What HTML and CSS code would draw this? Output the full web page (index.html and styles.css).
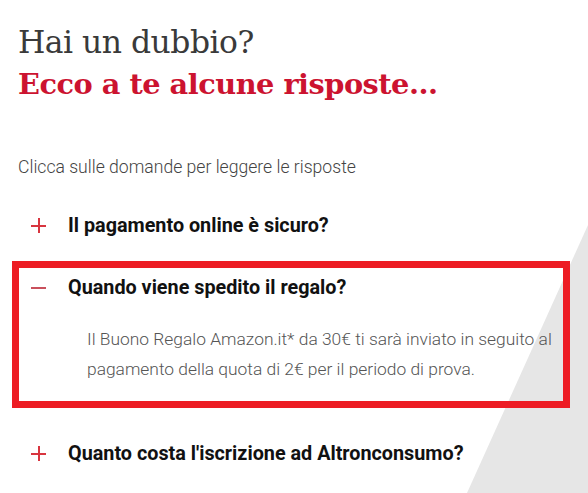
FILE: index.html
```html
<!DOCTYPE html>
<html lang="it">
<head>
<meta charset="utf-8">
<title>FAQ</title>
<link rel="stylesheet" href="styles.css">
</head>
<body>
<div class="bg-shape" aria-hidden="true"></div>
<main class="faq">
  <h1 class="title">
    <span class="title-light">Hai un dubbio?</span>
    <span class="title-strong">Ecco a te alcune risposte...</span>
  </h1>
  <p class="intro">Clicca sulle domande per leggere le risposte</p>
  <ul class="list">
    <li class="item">
      <div class="question"><span class="icon icon-plus"></span><span class="q-text">Il pagamento online è sicuro?</span></div>
    </li>
    <li class="item item-open">
      <div class="question"><span class="icon icon-minus"></span><span class="q-text">Quando viene spedito il regalo?</span></div>
      <p class="answer">Il Buono Regalo Amazon.it* da 30€ ti sarà inviato in seguito al pagamento della quota di 2€ per il periodo di prova.</p>
    </li>
    <li class="item item-last">
      <div class="question"><span class="icon icon-plus"></span><span class="q-text">Quanto costa l'iscrizione ad Altronconsumo?</span></div>
    </li>
  </ul>
</main>
</body>
</html>
```
FILE: styles.css
```css
html, body {
  margin: 0;
  padding: 0;
  background: #ffffff;
}
body {
  position: relative;
  width: 588px;
  height: 493px;
  overflow: hidden;
  font-family: Roboto, "Noto Sans", sans-serif;
}
.bg-shape {
  position: absolute;
  left: 0;
  top: 0;
  width: 588px;
  height: 493px;
  background: #e6e6e6;
  clip-path: polygon(588px 225px, 588px 493px, 467px 493px);
  z-index: 0;
}
.faq {
  position: relative;
  z-index: 1;
  padding: 21px 0 0 0;
}
.title {
  margin: 0 0 0 18px;
  font-weight: normal;
  display: flex;
  flex-direction: column;
}
.title-light {
  font-family: "DejaVu Serif", serif;
  font-weight: 400;
  font-size: 31.4px;
  line-height: 42px;
  color: #3a3a3a;
  letter-spacing: -0.5px;
}
.title-strong {
  font-family: "DejaVu Serif", serif;
  font-weight: 700;
  font-size: 28.8px;
  line-height: 42px;
  color: #cc1330;
  letter-spacing: -0.5px;
}
.intro {
  margin: 50px 0 0 18px;
  font-size: 17.6px;
  font-weight: 300;
  line-height: 24px;
  color: #444444;
}
.list {
  list-style: none;
  margin: 20px 0 0 12px;
  padding: 0;
  width: 558px;
}
.item {
  border: 7px solid transparent;
  padding: 0 0 10px 12px;
}
.item-open {
  border-color: #ed1c24;
  padding-bottom: 17px;
}
.item-last {
  margin-top: 19px;
}
.question {
  display: flex;
  align-items: center;
  height: 38px;
  gap: 22px;
}
.q-text {
  font-size: 19.8px;
  font-weight: 700;
  color: #111111;
  letter-spacing: 0;
}
.icon {
  position: relative;
  width: 15px;
  height: 15px;
  flex: none;
}
.icon::before,
.icon::after {
  content: "";
  position: absolute;
  background: #d8353f;
}
.icon::before {
  left: 0;
  top: 7px;
  width: 15px;
  height: 2px;
}
.icon-plus::after {
  left: 7px;
  top: 0;
  width: 2px;
  height: 15px;
}
.icon-minus::before {
  background: #c9505c;
}
.answer {
  margin: 18px 0 0 56px;
  font-size: 17.4px;
  font-weight: 300;
  line-height: 30px;
  color: #555555;
  width: 470px;
}
```
